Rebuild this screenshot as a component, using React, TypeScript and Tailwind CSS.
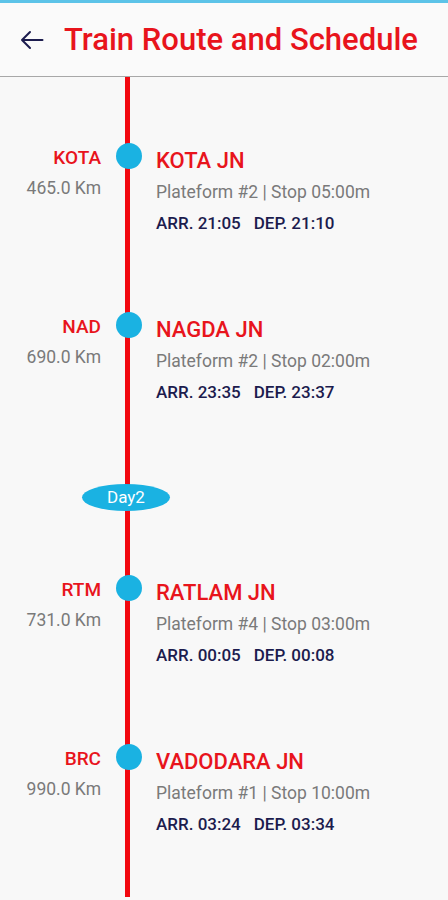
import React from 'react';

type Stop = {
  code: string;
  km: string;
  name: string;
  platform: string;
  stop: string;
  arr: string;
  dep: string;
};

const firstDay: Stop[] = [
  { code: 'KOTA', km: '465.0 Km', name: 'KOTA JN', platform: '2', stop: '05:00m', arr: '21:05', dep: '21:10' },
  { code: 'NAD', km: '690.0 Km', name: 'NAGDA JN', platform: '2', stop: '02:00m', arr: '23:35', dep: '23:37' },
];

const secondDay: Stop[] = [
  { code: 'RTM', km: '731.0 Km', name: 'RATLAM JN', platform: '4', stop: '03:00m', arr: '00:05', dep: '00:08' },
  { code: 'BRC', km: '990.0 Km', name: 'VADODARA JN', platform: '1', stop: '10:00m', arr: '03:24', dep: '03:34' },
];

const StationRow: React.FC<{ s: Stop }> = ({ s }) => (
  <div className="flex h-[169px]">
    {/* Code + distance */}
    <div className="w-[101px] flex flex-col items-end">
      <span className="text-[19px] leading-[24px] font-medium text-[#e8141c] mt-[2px]">{s.code}</span>
      <span className="text-[17.5px] leading-[22px] text-[#7a7a7a] mt-[7px]">{s.km}</span>
    </div>

    {/* Dot on the rail */}
    <div className="w-[55px] flex justify-center">
      <div className="w-[26px] h-[26px] -mt-[1px] rounded-full bg-[#1ab2e2] ml-[1px]" />
    </div>

    {/* Details */}
    <div className="flex flex-col">
      <span className="text-[22px] leading-[28px] font-medium text-[#e8141c] mt-[3px]">{s.name}</span>
      <span className="text-[17.5px] leading-[22px] text-[#7a7a7a] mt-[6px]">
        Plateform #{s.platform} | Stop {s.stop}
      </span>
      <span className="text-[17px] leading-[22px] font-medium text-[#1c1c4e] mt-[9px]">
        ARR. {s.arr}
        <span className="ml-[13px]">DEP. {s.dep}</span>
      </span>
    </div>
  </div>
);

const App: React.FC = () => {
  return (
    <div
      className="w-[448px] h-[900px] overflow-hidden bg-[#f8f8f8]"
      style={{ fontFamily: 'Roboto, "Noto Sans", sans-serif' }}
    >
      {/* Header */}
      <div className="h-[77px] border-t-[3px] border-[#5cc3e8] border-b border-b-[#a8a8a8] bg-[#fafafa] flex items-center">
        <svg
          className="ml-[20px] mt-[1px]"
          width="24"
          height="20"
          viewBox="0 0 24 20"
          fill="none"
          stroke="#1c1c4e"
          strokeWidth={2}
          strokeLinecap="round"
          strokeLinejoin="round"
          aria-hidden="true"
        >
          <path d="M22.5 10H2M10 2L2 10l8 8" />
        </svg>
        <h1 className="ml-[20px] text-[31px] leading-[36px] font-medium text-[#e8141c]">
          Train Route and Schedule
        </h1>
      </div>

      {/* Timeline */}
      <div className="relative pt-[67px]">
        <div className="absolute top-0 left-[125px] w-[5px] h-[820px] bg-[#f2080f]" />
        <div className="relative">
          {firstDay.map((s) => (
            <StationRow key={s.code} s={s} />
          ))}

          <div className="h-[94px] flex">
            <div className="w-[82px]" />
            <div className="mt-[2px] w-[88px] h-[27px] rounded-[50%] bg-[#1ab2e2] text-white text-[17px] flex items-center justify-center">
              Day2
            </div>
          </div>

          {secondDay.map((s) => (
            <StationRow key={s.code} s={s} />
          ))}
        </div>
      </div>
    </div>
  );
};

export default App;
